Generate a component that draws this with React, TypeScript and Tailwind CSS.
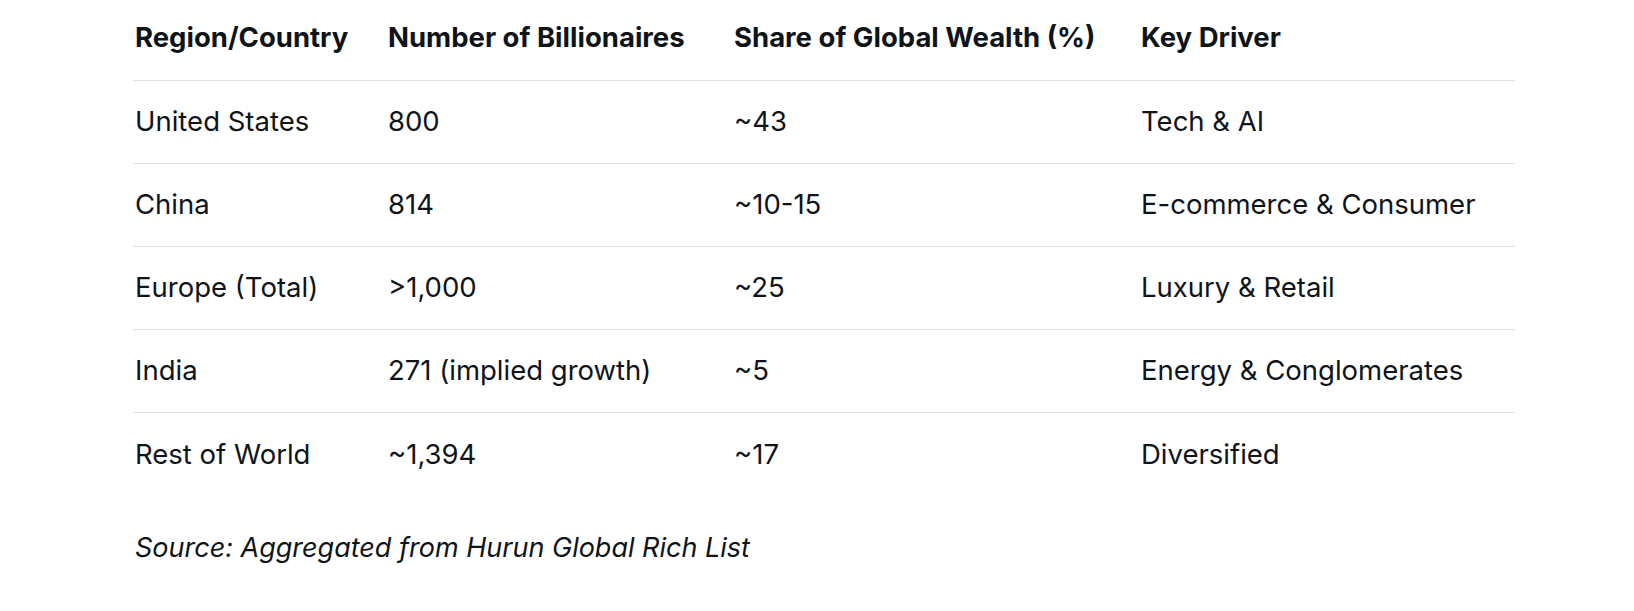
const rows = [
  ['United States', '800', '~43', 'Tech & AI'],
  ['China', '814', '~10-15', 'E-commerce & Consumer'],
  ['Europe (Total)', '>1,000', '~25', 'Luxury & Retail'],
  ['India', '271 (implied growth)', '~5', 'Energy & Conglomerates'],
  ['Rest of World', '~1,394', '~17', 'Diversified'],
];

const headers = ['Region/Country', 'Number of Billionaires', 'Share of Global Wealth (%)', 'Key Driver'];

const cols = 'grid grid-cols-[253px_346px_407px_376px]';

export default function App() {
  return (
    <main className="min-h-[611px] bg-white text-[#0f1419] font-['Inter',sans-serif] overflow-hidden">
      <div className="ml-[133px] w-[1382px]">
        {/* header */}
        <div className={`${cols} h-[81px] items-center pb-[4px] border-b border-[#dbe1e3] text-[27.5px] font-bold`}>
          {headers.map(h => (
            <div key={h} className="pl-[2px]">{h}</div>
          ))}
        </div>

        {/* rows */}
        {rows.map((r, i) => (
          <div
            key={r[0]}
            className={`${cols} h-[83px] items-center text-[27.5px] ${i < rows.length - 1 ? 'border-b border-[#dbe1e3]' : ''}`}
          >
            {r.map((c, j) => (
              <div key={j} className="pl-[2px]">{c}</div>
            ))}
          </div>
        ))}

        <p className="mt-[32px] pl-[2px] text-[27px] italic">Source: Aggregated from Hurun Global Rich List</p>
      </div>
    </main>
  );
}
